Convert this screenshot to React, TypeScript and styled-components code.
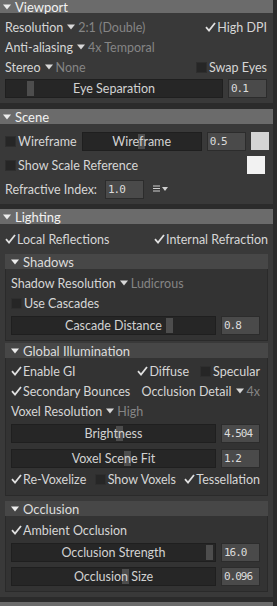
import React from "react";
import styled, { createGlobalStyle } from "styled-components";

const Global = createGlobalStyle`
  html, body {
    margin: 0;
    background: #2b2b2b;
    overflow: hidden;
  }
  body {
    font-family: "Lato", "Liberation Sans", sans-serif;
    font-size: 12.5px;
    color: #d6d6d6;
  }
`;

const Page = styled.div`
  width: 273px;
`;

const Panel = styled.section`
  margin-bottom: 6px;
`;

const PanelHeader = styled.div<{ sub?: boolean; h?: number }>`
  height: ${(p) => p.h ?? 15}px;
  display: flex;
  align-items: center;
  gap: 4px;
  padding-left: ${(p) => (p.sub ? "6px" : "3px")};
  background: ${(p) => (p.sub ? "#474747" : "#6b6b6b")};
  color: ${(p) => (p.sub ? "#dcdcdc" : "#f2f2f2")};
  font-size: 13px;
`;

const PanelBody = styled.div<{ pad?: string }>`
  background: #393939;
  padding: ${(p) => p.pad ?? "4px 5px 4px 5px"};
  display: flex;
  flex-direction: column;
`;

const SubPanel = styled.div<{ mt?: number }>`
  margin-top: ${(p) => p.mt ?? 3}px;
`;

const SubBody = styled.div<{ pad?: string }>`
  background: #333333;
  border: 1px solid #2a2a2a;
  border-top: none;
  padding: ${(p) => p.pad ?? "2px 7px 5px 5px"};
  display: flex;
  flex-direction: column;
`;

const Row = styled.div<{ h?: number; justify?: string; mt?: number }>`
  height: ${(p) => p.h ?? 20}px;
  margin-top: ${(p) => p.mt ?? 0}px;
  display: flex;
  align-items: center;
  justify-content: ${(p) => p.justify ?? "space-between"};
  gap: 5px;
  white-space: nowrap;
`;

const Group = styled.div<{ gap?: number }>`
  display: flex;
  align-items: center;
  gap: ${(p) => p.gap ?? 6}px;
`;

const Label = styled.span<{ muted?: boolean }>`
  color: ${(p) => (p.muted ? "#858585" : "#d6d6d6")};
`;

const Caret = styled.svg`
  width: 8px;
  height: 6px;
  margin: 0 3px 0 4px;
  flex: none;
`;

const Box = styled.span`
  width: 9px;
  height: 9px;
  background: #262626;
  border: 1px solid #2e2e2e;
  flex: none;
  margin-right: 2px;
`;

const CheckWrap = styled.label`
  display: flex;
  align-items: center;
`;

const Tick = styled.svg`
  width: 11px;
  height: 10px;
  flex: none;
  margin-right: 1px;
`;

const Track = styled.div<{ w?: number }>`
  position: relative;
  flex: ${(p) => (p.w ? "none" : "1")};
  width: ${(p) => (p.w ? `${p.w}px` : "auto")};
  height: 19px;
  background: #262626;
  border: 1px solid #1f1f1f;
  box-sizing: border-box;
  display: flex;
  align-items: center;
  justify-content: center;
  color: #d2d2d2;
`;

const Handle = styled.span`
  position: absolute;
  top: 1px;
  bottom: 1px;
  width: 7px;
  background: #4d4d4d;
`;

const TrackText = styled.span`
  position: relative;
`;

const NumField = styled.div<{ w?: number; ml?: number }>`
  width: ${(p) => p.w ?? 39}px;
  margin-left: ${(p) => p.ml ?? 0}px;
  height: 19px;
  box-sizing: border-box;
  flex: none;
  background: #4a4a4a;
  border: 1px solid #2c2c2c;
  color: #dcdcdc;
  font-family: "DejaVu Sans Mono", "Liberation Mono", monospace;
  font-size: 11px;
  letter-spacing: -1px;
  display: flex;
  align-items: center;
  padding-left: 2px;
`;

const Swatch = styled.div<{ shade: string }>`
  width: 18px;
  height: 18px;
  background: ${(p) => p.shade};
  flex: none;
`;

const MenuIcon = styled.svg`
  width: 16px;
  height: 8px;
  margin-left: 4px;
`;

const Triangle = () => (
  <Caret viewBox="0 0 8 6">
    <path d="M0 0.5 H8 L4 5.5 Z" fill="#d8d8d8" />
  </Caret>
);

const Dropdown = ({ label, value }: { label: string; value: string }) => (
  <Group gap={0}>
    <Label>{label}</Label>
    <Triangle />
    <Label muted>{value}</Label>
  </Group>
);

const Check = ({ label, on }: { label: string; on?: boolean }) => (
  <CheckWrap>
    {on ? (
      <Tick viewBox="0 0 11 10">
        <path d="M1 5.2 L4 8.5 L10 1" stroke="#e0e0e0" strokeWidth="1.8" fill="none" />
      </Tick>
    ) : (
      <Box />
    )}
    <Label>{label}</Label>
  </CheckWrap>
);

const Slider = ({ label, at, w }: { label: string; at: number; w?: number }) => (
  <Track w={w}>
    <Handle style={{ left: `${at}%` }} />
    <TrackText>{label}</TrackText>
  </Track>
);

const Header = ({ title, sub, h }: { title: string; sub?: boolean; h?: number }) => (
  <PanelHeader sub={sub} h={h}>
    <svg width="8" height="6" viewBox="0 0 8 6">
      <path d="M0 0.5 H8 L4 5.5 Z" fill="#ececec" />
    </svg>
    <span>{title}</span>
  </PanelHeader>
);

export default function App() {
  return (
    <Page>
      <Global />
      <Panel>
        <Header title="Viewport" h={13} />
        <PanelBody pad="4px 6px 5px 5px">
          <Row>
            <Dropdown label="Resolution" value="2:1 (Double)" />
            <Check label="High DPI" on />
          </Row>
          <Row>
            <Dropdown label="Anti-aliasing" value="4x Temporal" />
          </Row>
          <Row>
            <Dropdown label="Stereo" value="None" />
            <Check label="Swap Eyes" />
          </Row>
          <Row h={19} mt={2}>
            <Slider label="Eye Separation" at={9.6} />
            <NumField>0.1</NumField>
          </Row>
        </PanelBody>
      </Panel>

      <Panel style={{ marginBottom: 5 }}>
        <Header title="Scene" />
        <PanelBody pad="6px 8px 4px 5px">
          <Row h={22}>
            <Group gap={5}>
              <Check label="Wireframe" />
              <Slider label="Wireframe" at={47} w={120} />
              <NumField>0.5</NumField>
            </Group>
            <Swatch shade="#d5d5d5" />
          </Row>
          <Row h={22} mt={2}>
            <Check label="Show Scale Reference" />
            <Swatch shade="#f2f2f2" />
          </Row>
          <Row h={22} mt={2} justify="flex-start">
            <Label>Refractive Index:</Label>
            <NumField ml={3}>1.0</NumField>
            <MenuIcon viewBox="0 0 16 8">
              <path d="M0 1 H7 M0 3.5 H7 M0 6 H7" stroke="#cfcfcf" strokeWidth="1" />
              <path d="M9 2 H15 L12 6 Z" fill="#cfcfcf" />
            </MenuIcon>
          </Row>
        </PanelBody>
      </Panel>

      <Panel style={{ marginBottom: 5 }}>
        <Header title="Lighting" />
        <PanelBody pad="5px 5px 5px 5px">
          <Row>
            <Check label="Local Reflections" on />
            <Check label="Internal Refraction" on />
          </Row>

          <SubPanel mt={5}>
            <Header title="Shadows" sub />
            <SubBody pad="4px 7px 5px 5px">
              <Row justify="flex-start">
                <Dropdown label="Shadow Resolution" value="Ludicrous" />
              </Row>
              <Row justify="flex-start">
                <Check label="Use Cascades" />
              </Row>
              <Row h={20} mt={2}>
                <Slider label="Cascade Distance" at={76} />
                <NumField>0.8</NumField>
              </Row>
            </SubBody>
          </SubPanel>

          <SubPanel mt={2}>
            <Header title="Global Illumination" sub />
            <SubBody pad="3px 7px 6px 5px">
              <Row>
                <Check label="Enable GI" on />
                <Group gap={11}>
                  <Check label="Diffuse" on />
                  <Check label="Specular" />
                </Group>
              </Row>
              <Row>
                <Check label="Secondary Bounces" on />
                <Dropdown label="Occlusion Detail" value="4x" />
              </Row>
              <Row justify="flex-start">
                <Dropdown label="Voxel Resolution" value="High" />
              </Row>
              <Row h={20} mt={2}>
                <Slider label="Brightness" at={51} />
                <NumField>4.504</NumField>
              </Row>
              <Row h={20} mt={5}>
                <Slider label="Voxel Scene Fit" at={55} />
                <NumField>1.2</NumField>
              </Row>
              <Row mt={1}>
                <Check label="Re-Voxelize" on />
                <Check label="Show Voxels" />
                <Check label="Tessellation" on />
              </Row>
            </SubBody>
          </SubPanel>

          <SubPanel mt={5}>
            <Header title="Occlusion" sub />
            <SubBody pad="4px 7px 5px 5px">
              <Row justify="flex-start">
                <Check label="Ambient Occlusion" on />
              </Row>
              <Row h={20} mt={2}>
                <Slider label="Occlusion Strength" at={95.6} />
                <NumField>16.0</NumField>
              </Row>
              <Row h={20} mt={4}>
                <Slider label="Occlusion Size" at={54} />
                <NumField>0.096</NumField>
              </Row>
            </SubBody>
          </SubPanel>
        </PanelBody>
      </Panel>
      <PanelHeader />
    </Page>
  );
}
